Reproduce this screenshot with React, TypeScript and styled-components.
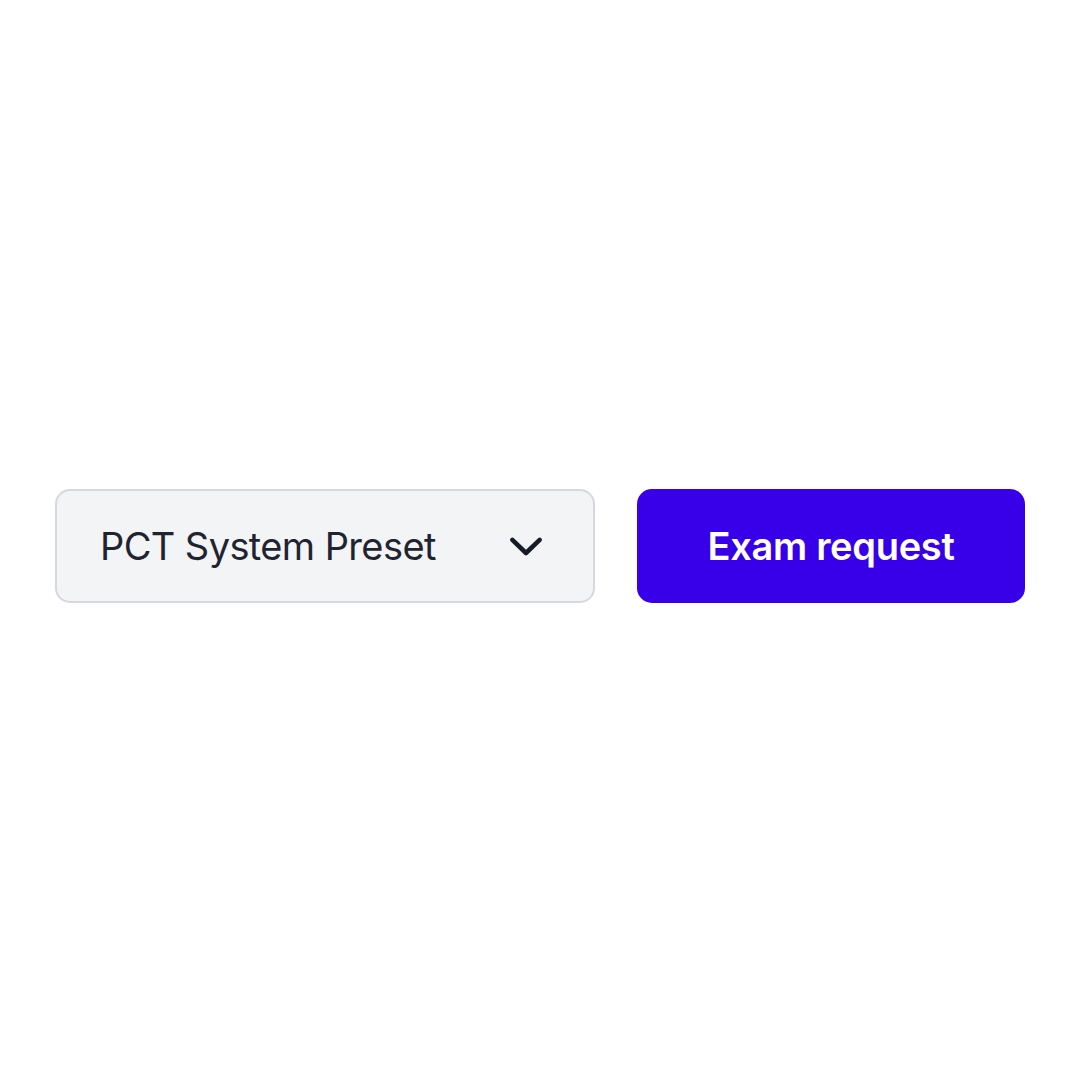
import React from 'react';
import styled, { createGlobalStyle } from 'styled-components';

const GlobalStyle = createGlobalStyle`
    html, body {
        margin: 0;
        padding: 0;
        background: #ffffff;
    }
    body {
        font-family: Inter, "Noto Sans", sans-serif;
    }
`;

const Page = styled.div`
    box-sizing: border-box;
    height: 1080px;
    padding: 12px 55px 0;
    display: flex;
    align-items: center;
`;

const Row = styled.div`
    display: flex;
    align-items: stretch;
    gap: 42px;
    width: 100%;
`;

const Select = styled.button`
    box-sizing: border-box;
    width: 540px;
    height: 114px;
    padding: 0 46px 0 43px;
    display: flex;
    align-items: center;
    justify-content: space-between;
    background: #f3f4f6;
    border: 2px solid #d6d8de;
    border-radius: 15px;
    font-family: Inter, "Noto Sans", sans-serif;
    font-size: 38px;
    letter-spacing: -0.6px;
    color: #1f2430;
    cursor: pointer;
`;

const Chevron = styled.svg`
    width: 42px;
    height: 42px;
    flex-shrink: 0;
`;

const PrimaryButton = styled.button`
    box-sizing: border-box;
    flex: 1;
    height: 114px;
    border: none;
    border-radius: 15px;
    background: #3700e8;
    color: #ffffff;
    font-family: Inter, "Noto Sans", sans-serif;
    font-size: 38px;
    font-weight: 600;
    letter-spacing: -0.3px;
    cursor: pointer;
`;

export default function App() {
    return (<>
        <GlobalStyle />
        <Page>
            <Row>
                <Select>
                    <span>PCT System Preset</span>
                    <Chevron viewBox="0 0 24 24" fill="none" stroke="#161b26" strokeWidth={2.6} strokeLinecap="round" strokeLinejoin="round">
                        <path d="M4.2 8.5l7.8 7.5 7.8-7.5" />
                    </Chevron>
                </Select>
                <PrimaryButton>Exam request</PrimaryButton>
            </Row>
        </Page>
    </>);
}
